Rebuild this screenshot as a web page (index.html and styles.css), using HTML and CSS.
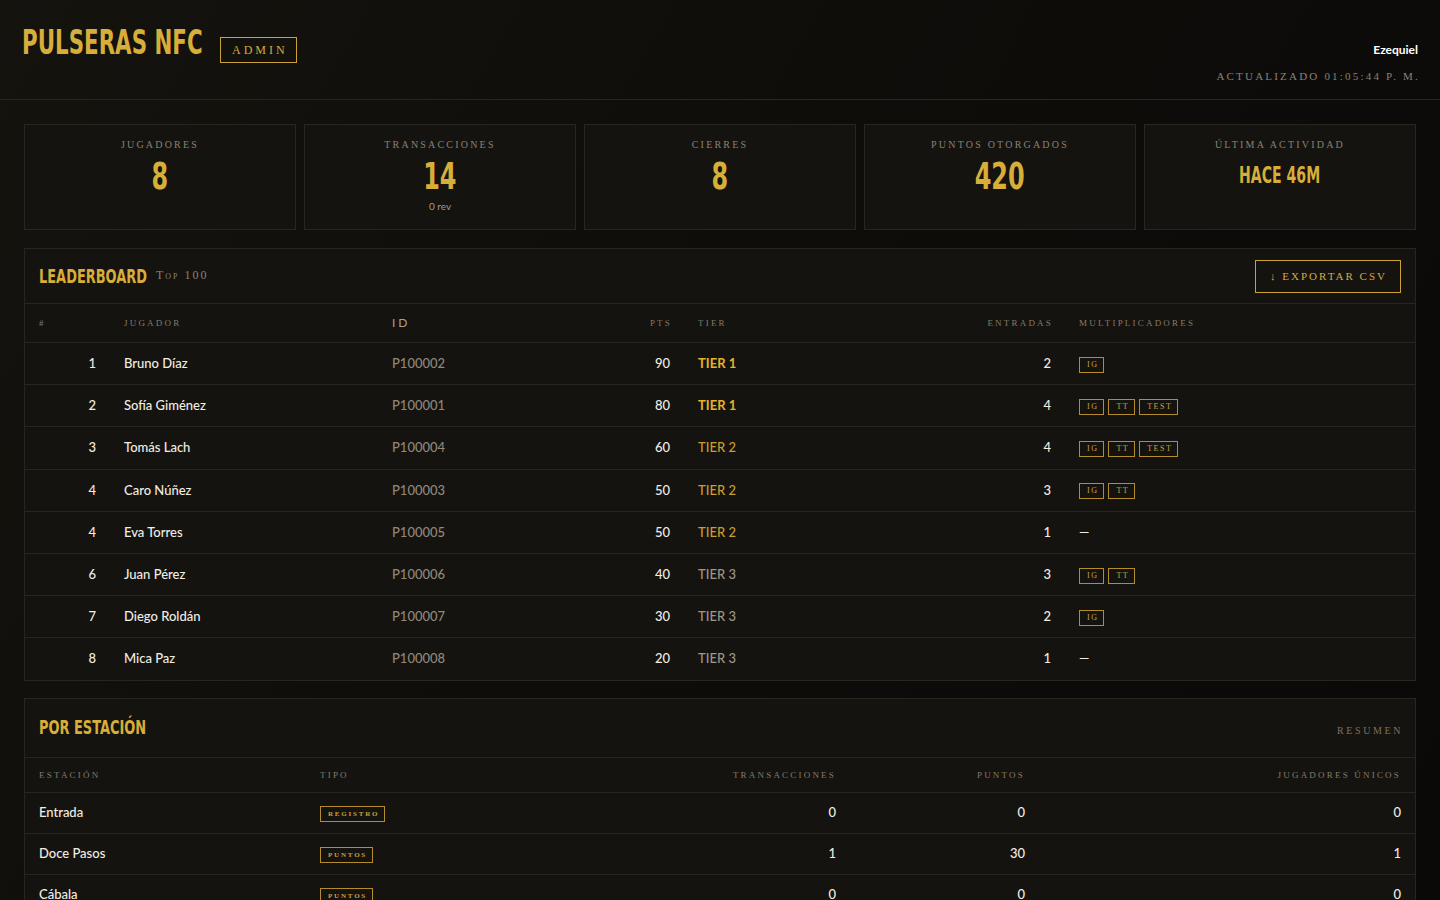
FILE: index.html
```html
<!DOCTYPE html>
<html lang="es">
<head>
    <meta charset="UTF-8">
    <meta name="viewport" content="width=device-width, initial-scale=1.0">
    <title>Pulseras NFC - Admin</title>
    <link rel="stylesheet" href="styles.css">
</head>
<body>

    <header class="topbar">
        <div class="brand">
            <h1 class="brand-title"><span class="display">PULSERAS NFC</span></h1>
            <span class="role-badge">Admin</span>
        </div>
        <div class="session">
            <div class="user-name">Ezequiel</div>
            <div class="updated">Actualizado 01:05:44 p. m.</div>
        </div>
    </header>

    <main class="content">

        <!-- Resumen general -->
        <section class="stats">
            <div class="stat">
                <div class="stat-label">Jugadores</div>
                <div class="stat-value"><span class="display">8</span></div>
            </div>
            <div class="stat">
                <div class="stat-label">Transacciones</div>
                <div class="stat-value"><span class="display">14</span></div>
                <div class="stat-note">0 rev</div>
            </div>
            <div class="stat">
                <div class="stat-label">Cierres</div>
                <div class="stat-value"><span class="display">8</span></div>
            </div>
            <div class="stat">
                <div class="stat-label">Puntos otorgados</div>
                <div class="stat-value"><span class="display">420</span></div>
            </div>
            <div class="stat">
                <div class="stat-label">Última actividad</div>
                <div class="stat-value stat-value-small"><span class="display">HACE 46M</span></div>
            </div>
        </section>

        <!-- Leaderboard -->
        <section class="panel">
            <div class="panel-head">
                <div class="panel-heading">
                    <h2 class="panel-title title-board"><span class="display">LEADERBOARD</span></h2>
                    <span class="panel-sub">Top 100</span>
                </div>
                <button class="btn-export">&#8595; Exportar CSV</button>
            </div>
            <table class="board">
                <colgroup>
                    <col style="width:85px">
                    <col style="width:268px">
                    <col style="width:257px">
                    <col style="width:49px">
                    <col style="width:276px">
                    <col style="width:105px">
                    <col>
                </colgroup>
                <thead>
                    <tr>
                        <th>#</th>
                        <th>Jugador</th>
                        <th class="th-id">ID</th>
                        <th class="num">Pts</th>
                        <th>Tier</th>
                        <th class="num">Entradas</th>
                        <th>Multiplicadores</th>
                    </tr>
                </thead>
                <tbody>
                    <tr>
                        <td class="num">1</td><td>Bruno Díaz</td><td class="muted">P100002</td><td class="num">90</td>
                        <td class="tier-1">TIER 1</td><td class="num">2</td>
                        <td><div class="tags"><span class="tag">IG</span></div></td>
                    </tr>
                    <tr>
                        <td class="num">2</td><td>Sofía Giménez</td><td class="muted">P100001</td><td class="num">80</td>
                        <td class="tier-1">TIER 1</td><td class="num">4</td>
                        <td><div class="tags"><span class="tag">IG</span><span class="tag">TT</span><span class="tag">TEST</span></div></td>
                    </tr>
                    <tr>
                        <td class="num">3</td><td>Tomás Lach</td><td class="muted">P100004</td><td class="num">60</td>
                        <td class="tier-2">TIER 2</td><td class="num">4</td>
                        <td><div class="tags"><span class="tag">IG</span><span class="tag">TT</span><span class="tag">TEST</span></div></td>
                    </tr>
                    <tr>
                        <td class="num">4</td><td>Caro Núñez</td><td class="muted">P100003</td><td class="num">50</td>
                        <td class="tier-2">TIER 2</td><td class="num">3</td>
                        <td><div class="tags"><span class="tag">IG</span><span class="tag">TT</span></div></td>
                    </tr>
                    <tr>
                        <td class="num">4</td><td>Eva Torres</td><td class="muted">P100005</td><td class="num">50</td>
                        <td class="tier-2">TIER 2</td><td class="num">1</td>
                        <td>—</td>
                    </tr>
                    <tr>
                        <td class="num">6</td><td>Juan Pérez</td><td class="muted">P100006</td><td class="num">40</td>
                        <td class="tier-3">TIER 3</td><td class="num">3</td>
                        <td><div class="tags"><span class="tag">IG</span><span class="tag">TT</span></div></td>
                    </tr>
                    <tr>
                        <td class="num">7</td><td>Diego Roldán</td><td class="muted">P100007</td><td class="num">30</td>
                        <td class="tier-3">TIER 3</td><td class="num">2</td>
                        <td><div class="tags"><span class="tag">IG</span></div></td>
                    </tr>
                    <tr>
                        <td class="num">8</td><td>Mica Paz</td><td class="muted">P100008</td><td class="num">20</td>
                        <td class="tier-3">TIER 3</td><td class="num">1</td>
                        <td>—</td>
                    </tr>
                </tbody>
            </table>
        </section>

        <!-- Por estacion -->
        <section class="panel">
            <div class="panel-head panel-head-tall">
                <h2 class="panel-title title-station"><span class="display">POR ESTACIÓN</span></h2>
                <span class="panel-side">Resumen</span>
            </div>
            <table class="stations">
                <colgroup>
                    <col style="width:281px">
                    <col style="width:394px">
                    <col style="width:150px">
                    <col style="width:189px">
                    <col>
                </colgroup>
                <thead>
                    <tr>
                        <th>Estación</th>
                        <th>Tipo</th>
                        <th class="num">Transacciones</th>
                        <th class="num">Puntos</th>
                        <th class="num">Jugadores únicos</th>
                    </tr>
                </thead>
                <tbody>
                    <tr>
                        <td>Entrada</td><td><div class="tags"><span class="tag tag-type">Registro</span></div></td>
                        <td class="num">0</td><td class="num">0</td><td class="num">0</td>
                    </tr>
                    <tr>
                        <td>Doce Pasos</td><td><div class="tags"><span class="tag tag-type">Puntos</span></div></td>
                        <td class="num">1</td><td class="num">30</td><td class="num">1</td>
                    </tr>
                    <tr>
                        <td>Cábala</td><td><div class="tags"><span class="tag tag-type">Puntos</span></div></td>
                        <td class="num">0</td><td class="num">0</td><td class="num">0</td>
                    </tr>
                </tbody>
            </table>
        </section>

    </main>

</body>
</html>
```

FILE: styles.css
```css
* {
    margin: 0;
    padding: 0;
    box-sizing: border-box;
}

body {
    font-family: 'Lato', 'Noto Sans', sans-serif;
    background: linear-gradient(120deg, #15130e 0%, #0e0d0a 45%, #0a0908 100%);
    color: #f1ede4;
    min-height: 100vh;
}

/* Fuente condensada para titulos y cifras */
.display {
    display: inline-block;
    font-family: 'Liberation Sans Narrow', 'Arial Narrow', 'DejaVu Sans Condensed', sans-serif;
    font-weight: 700;
    color: #d7ae3a;
    white-space: nowrap;
    transform: scaleX(0.72);
    transform-origin: left center;
}

/* ---------- Cabecera ---------- */
.topbar {
    height: 100px;
    padding: 0 22px;
    display: flex;
    justify-content: space-between;
    align-items: flex-start;
    border-bottom: 1px solid #2a261f;
}

.brand {
    display: flex;
    align-items: baseline;
    padding-top: 23px;
}

.brand-title {
    width: 183px;
    font-size: 33px;
    line-height: 36px;
    font-weight: 700;
}

.role-badge {
    margin-left: 15px;
    padding: 5px 8px 5px 11px;
    border: 1px solid #c9a136;
    color: #d2ab45;
    font-family: 'Liberation Serif', serif;
    font-size: 12px;
    line-height: 14px;
    letter-spacing: 3px;
    text-transform: uppercase;
}

.session {
    padding-top: 42px;
    text-align: right;
}

.user-name {
    font-size: 12px;
    line-height: 15px;
    font-weight: 700;
    color: #ffffff;
}

.updated {
    margin-top: 12px;
    margin-right: -2px;
    font-family: 'Liberation Serif', serif;
    font-size: 11px;
    line-height: 14px;
    letter-spacing: 2.2px;
    text-transform: uppercase;
    color: #8a8272;
}

/* ---------- Contenido ---------- */
.content {
    padding: 24px 24px 40px;
}

.stats {
    display: grid;
    grid-template-columns: repeat(5, 1fr);
    gap: 8px;
    margin-bottom: 18px;
}

.stat {
    height: 106px;
    padding: 14px 10px 0;
    background-color: #15130f;
    border: 1px solid #2a261f;
    text-align: center;
}

.stat-label {
    font-family: 'Liberation Serif', serif;
    font-size: 10px;
    line-height: 12px;
    letter-spacing: 2.2px;
    text-transform: uppercase;
    color: #8a8272;
}

.stat-value {
    margin-top: 3px;
    font-size: 38px;
    line-height: 40px;
}

.stat-value .display {
    transform: scaleX(0.7);
    transform-origin: center center;
}

.stat-value-small {
    margin-top: 3px;
    font-size: 23px;
    line-height: 40px;
}

.stat-value-small .display {
    transform: scaleX(0.68);
}

.stat-note {
    margin-top: 4px;
    font-size: 10px;
    line-height: 12px;
    color: #a29a8a;
}

/* ---------- Paneles ---------- */
.panel {
    background-color: #15130f;
    border: 1px solid #2a261f;
    margin-bottom: 17px;
}

.panel-head {
    height: 55px;
    padding: 0 14px;
    display: flex;
    align-items: center;
    justify-content: space-between;
    border-bottom: 1px solid #2a261f;
}

.panel-head-tall {
    height: 59px;
    align-items: baseline;
    padding-top: 16px;
}

.panel-heading {
    display: flex;
    align-items: center;
    margin-top: -2px;
}

.panel-title {
    font-size: 20px;
    line-height: 22px;
}

.title-board {
    width: 117px;
}

.title-station {
    width: 120px;
}

.panel-sub {
    font-family: 'Liberation Serif', serif;
    font-size: 12px;
    font-variant: small-caps;
    letter-spacing: 2px;
    color: #8a8272;
}

.panel-side {
    font-family: 'Liberation Serif', serif;
    font-size: 10px;
    letter-spacing: 2.6px;
    text-transform: uppercase;
    color: #7a7262;
    margin-right: -2px;
}

.btn-export {
    height: 33px;
    padding: 0 13px 0 14px;
    background: transparent;
    border: 1px solid #c9a136;
    color: #d2ab45;
    font-family: 'Liberation Serif', serif;
    font-size: 11px;
    letter-spacing: 2px;
    text-transform: uppercase;
    cursor: pointer;
}

/* ---------- Tablas ---------- */
table {
    width: 100%;
    table-layout: fixed;
    border-collapse: separate;
    border-spacing: 0;
}

th {
    padding: 13px 14px;
    line-height: 12px;
    text-align: left;
    font-family: 'Liberation Serif', serif;
    font-size: 9px;
    font-weight: 400;
    letter-spacing: 2.2px;
    text-transform: uppercase;
    color: #837b6b;
    border-bottom: 1px solid #2a261f;
    white-space: nowrap;
}

.th-id {
    font-family: 'Lato', sans-serif;
    font-size: 12px;
    letter-spacing: 3px;
    color: #a8a090;
}

td {
    padding: 12.1px 14px;
    line-height: 17px;
    font-size: 13px;
    font-weight: 500;
    color: #f1ede4;
    border-bottom: 1px solid #2a261f;
    white-space: nowrap;
}

tbody tr:last-child td {
    border-bottom: none;
}

.num {
    text-align: right;
}

th.num {
    padding-right: 12px;
}

.muted {
    color: #8f887a;
}

.tier-1 {
    color: #e3b328;
    font-weight: 700;
}

.tier-2 {
    color: #c99d2e;
}

.tier-3 {
    color: #9d968a;
}

.tags {
    display: flex;
    align-items: center;
    gap: 4px;
    height: 17px;
    padding-top: 2px;
}

.tag {
    height: 16px;
    padding: 0 5px 0 7px;
    border: 1px solid #b48d2a;
    color: #c9a13e;
    font-family: 'Liberation Serif', serif;
    font-size: 8px;
    font-weight: 400;
    line-height: 14px;
    letter-spacing: 1.5px;
}

/* Tabla de estaciones */
.stations th {
    padding: 11px 14px;
}

.stations td {
    padding: 11.5px 14px;
}

.tag-type {
    padding: 0 5px 0 7px;
    font-size: 7px;
    font-weight: 700;
    letter-spacing: 1.8px;
    text-transform: uppercase;
}
```
